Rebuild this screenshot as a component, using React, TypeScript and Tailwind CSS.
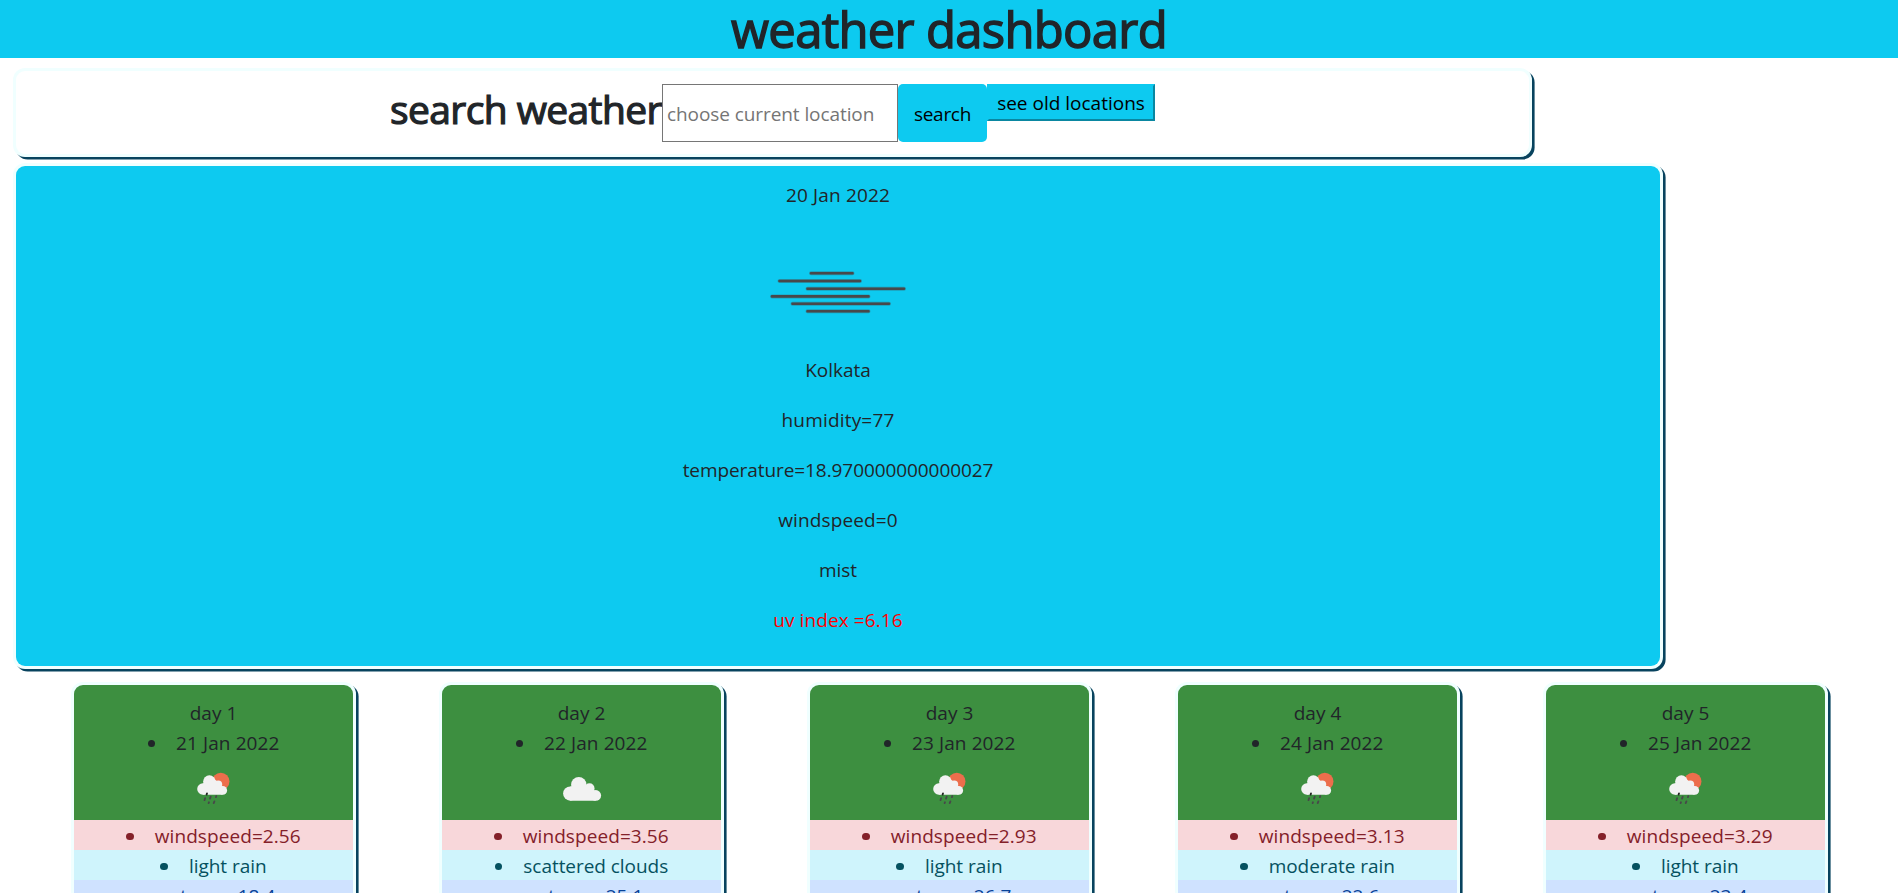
import type { ReactNode } from "react";

type Sky = "rain" | "cloud";

interface Day {
  n: number;
  date: string;
  wind: string;
  text: string;
  temp: string;
  sky: Sky;
}

const days: Day[] = [
  { n: 1, date: "21 Jan 2022", wind: "2.56", text: "light rain", temp: "18.4", sky: "rain" },
  { n: 2, date: "22 Jan 2022", wind: "3.56", text: "scattered clouds", temp: "25.1", sky: "cloud" },
  { n: 3, date: "23 Jan 2022", wind: "2.93", text: "light rain", temp: "26.7", sky: "rain" },
  { n: 4, date: "24 Jan 2022", wind: "3.13", text: "moderate rain", temp: "22.6", sky: "rain" },
  { n: 5, date: "25 Jan 2022", wind: "3.29", text: "light rain", temp: "23.4", sky: "rain" },
];

function MistIcon() {
  return (
    <svg width="200" height="145" viewBox="0 0 200 145" className="mx-auto block" aria-hidden="true">
      <g stroke="#48484a" strokeLinecap="round">
        <g strokeWidth="4" opacity="0.35">
          <path d="M73 63.2H114.5M41.5 71H122M69.5 78.8H166M34 86.4H130.5M54.5 93.8H151M69.5 101.3H130.5" />
        </g>
        <g strokeWidth="2.6">
          <path d="M73 63.2H114.5M41.5 71H122M69.5 78.8H166M34 86.4H130.5M54.5 93.8H151M69.5 101.3H130.5" />
        </g>
      </g>
    </svg>
  );
}

function RainIcon() {
  return (
    <svg width="50" height="50" viewBox="0 0 50 50" className="mx-auto block" aria-hidden="true">
      <circle cx="31.8" cy="23.4" r="8.7" fill="#ec6e4c" />
      <g fill="#f2f2f2">
        <circle cx="20.4" cy="23.6" r="6.3" />
        <circle cx="13.9" cy="31" r="5.7" />
        <circle cx="29.2" cy="26.4" r="4" />
        <circle cx="33.8" cy="32.4" r="4.3" />
        <path d="M13.9 25.4L26.6 22L33.6 28.2V36.7H13.9Z" />
      </g>
      <g stroke="#48484a" strokeWidth="1.8" strokeLinecap="round">
        <path d="M18 35.4L17.6 36.6" stroke="#222222" />
        <path d="M16.1 40.2L15.5 42.2" />
        <path d="M21.7 38.6L21 40.6" />
        <path d="M27.3 38L26.9 39.2" />
        <path d="M20 44.2L19.6 45.1" />
        <path d="M25.4 43.4L24.7 45.1" />
      </g>
    </svg>
  );
}

function CloudIcon() {
  return (
    <svg width="50" height="50" viewBox="0 0 50 50" className="mx-auto block" aria-hidden="true">
      <g fill="#f2f2f2">
        <circle cx="21.8" cy="26.7" r="7.7" />
        <circle cx="13.2" cy="35.6" r="7.1" />
        <circle cx="32.5" cy="30.3" r="5" />
        <circle cx="38.8" cy="37.4" r="5.3" />
        <path d="M13.2 28.5L27.6 26L37.6 32.1L38.8 42.7H13.2Z" />
      </g>
    </svg>
  );
}

function Item({ children, className = "" }: { children: ReactNode; className?: string }) {
  return (
    <li className={`flex h-[30px] items-center justify-center ${className}`}>
      <span className="mt-px mr-[21px] h-[7.5px] w-[7.5px] rounded-full bg-current" />
      <span>{children}</span>
    </li>
  );
}

function DayCard({ day }: { day: Day }) {
  return (
    <ul className="w-[279px] shrink-0 overflow-hidden rounded-[9px] bg-[#3d8f40] pt-[13px] shadow-[0_0_0_3px_#f0ffff,2.6px_2.6px_0_3px_#08435e]">
      <li className="h-[30px] text-center">day {day.n}</li>
      <Item className="tracking-[0.1px]">{day.date}</Item>
      <li className="h-[62px]">{day.sky === "rain" ? <RainIcon /> : <CloudIcon />}</li>
      <Item className="bg-[#f8d7da] pt-[2px] tracking-[0.08px] text-[#842029]">windspeed={day.wind}</Item>
      <Item className="bg-[#cff4fc] pt-[2px] tracking-[-0.05px] text-[#055160]">{day.text}</Item>
      <Item className="bg-[#cfe2ff] pt-[2px] text-[#084298]">temp={day.temp}</Item>
    </ul>
  );
}

export default function App() {
  return (
    <div className="h-[893px] overflow-hidden bg-white font-['Open_Sans','Noto_Sans',sans-serif] text-[19px] leading-[30px] text-[#212529]">
      <header className="h-[58px] bg-[#0dcaf0] text-center">
        <h1 className="text-[49px] leading-[58px] tracking-[-0.7px] [-webkit-text-stroke:1.4px_#212529]">weather dashboard</h1>
      </header>

      <section className="mt-[13px] ml-4 flex h-[83px] w-[1513px] items-start justify-center rounded-[9px] bg-white pt-[13px] shadow-[0_0_0_3px_#f0ffff,2.6px_2.6px_0_3px_#08435e]">
        <h2 className="w-[272px] whitespace-nowrap text-[39px] leading-[50px] tracking-[-0.6px] [-webkit-text-stroke:1.2px_#212529]">search weather</h2>
        <input
          className="h-[58px] w-[236px] border border-[#767676] bg-white pt-[2px] pl-1 tracking-[-0.08px] outline-none placeholder:text-[#757575] placeholder:opacity-100"
          placeholder="choose current location"
        />
        <button className="h-[58px] w-[89px] rounded-[5px] bg-[#0dcaf0] pt-[2px] tracking-[-0.3px] text-black">search</button>
        <button className="h-[37px] w-[168px] border-2 border-t-[#0dcaf0] border-r-[#0a87a1] border-b-[#0a87a1] border-l-[#0dcaf0] bg-[#0dcaf0] text-black">
          <span className="block leading-[32px]">see old locations</span>
        </button>
      </section>

      <section className="mt-3 ml-4 h-[500px] w-[1644px] rounded-[9px] bg-[#0dcaf0] pt-[14px] text-center shadow-[0_0_0_3px_#f0ffff,2.6px_2.6px_0_3px_#08435e]">
        <p className="tracking-[0.15px]">20 Jan 2022</p>
        <MistIcon />
        <div className="flex flex-col gap-5">
          <p>Kolkata</p>
          <p className="tracking-[0.18px]">humidity=77</p>
          <p className="tracking-[-0.08px]">temperature=18.970000000000027</p>
          <p className="tracking-[0.12px]">windspeed=0</p>
          <p>mist</p>
          <p className="tracking-[0.1px] text-[#ff0000]">uv index =6.16</p>
        </div>
      </section>

      <section className="mt-[19px] ml-[74px] flex gap-[89px]">
        {days.map((day) => (
          <DayCard key={day.n} day={day} />
        ))}
      </section>
    </div>
  );
}
